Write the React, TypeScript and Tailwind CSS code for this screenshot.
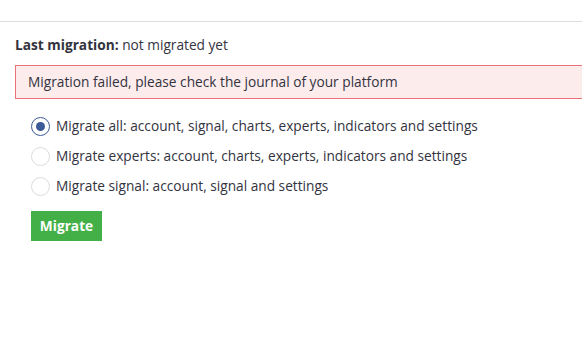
import { useState } from "react";

const options = [
  { id: "all", label: "Migrate all: account, signal, charts, experts, indicators and settings" },
  { id: "experts", label: "Migrate experts: account, charts, experts, indicators and settings" },
  { id: "signal", label: "Migrate signal: account, signal and settings" },
];

export default function App() {
  const [selected, setSelected] = useState("all");

  return (
    <div className="w-[582px] h-[363px] bg-white overflow-hidden text-[13.7px] text-[#333340]" style={{ fontFamily: '"Open Sans", "Liberation Sans", sans-serif' }}>
      <div className="h-[22px] border-b border-[#dddddd]"></div>
      <div className="pl-[15px]">
        <div className="mt-[14px] leading-[18px]">
          <span className="font-bold">Last migration:</span> not migrated yet
        </div>
        <div className="mt-[11px] w-[580px] h-[34px] flex items-center pl-[12px] border border-[#ec7176] bg-[#fdecec]">
          Migration failed, please check the journal of your platform
        </div>
        <div className="mt-[18px] pl-[16px] flex flex-col gap-[12px]">
          {options.map((o) => (
            <label key={o.id} className="flex items-center gap-[6px] h-[18px] cursor-pointer" onClick={() => setSelected(o.id)}>
              <span className={`w-[19px] h-[19px] rounded-full border flex items-center justify-center ${selected === o.id ? "border-[#3d5a98] border-[1.5px]" : "border-[#dcdcdc]"}`}>
                {selected === o.id && <span className="w-[9px] h-[9px] rounded-full bg-[#3d5a98]"></span>}
              </span>
              <span>{o.label}</span>
            </label>
          ))}
        </div>
        <button className="mt-[16px] ml-[16px] w-[71px] h-[30px] bg-[#43b047] text-white font-bold">Migrate</button>
      </div>
    </div>
  );
}
